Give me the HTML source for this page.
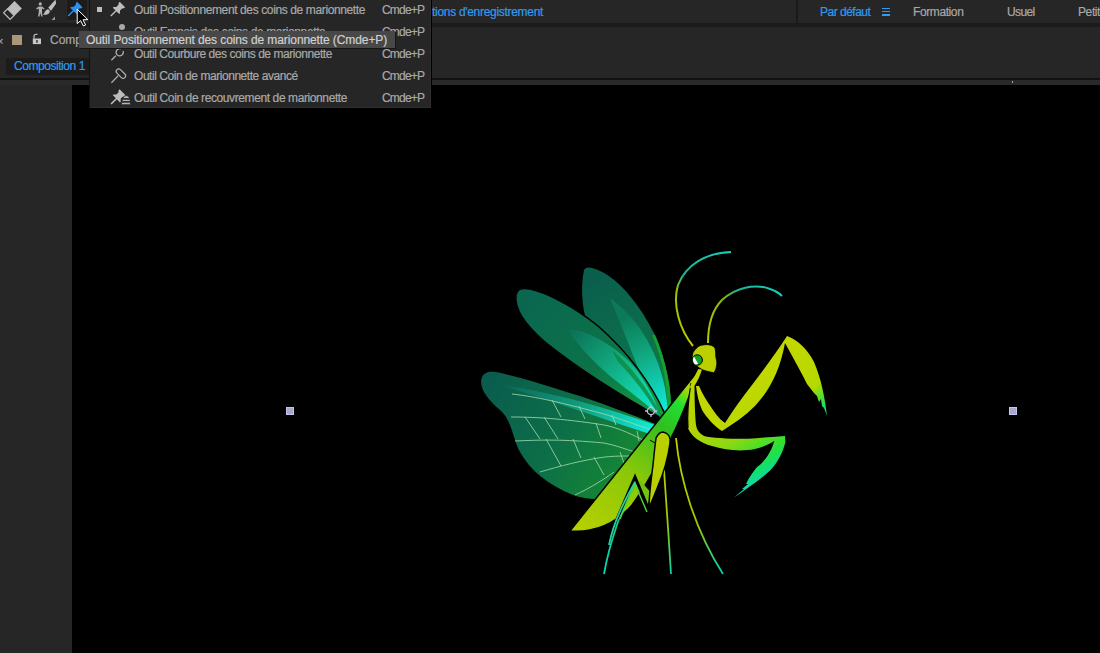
<!DOCTYPE html>
<html><head><meta charset="utf-8">
<style>
*{margin:0;padding:0;box-sizing:border-box}
html,body{width:1100px;height:653px;overflow:hidden;background:#000;font-family:"Liberation Sans",sans-serif}
.a{position:absolute}
#tb{left:0;top:0;width:1100px;height:23px;background:#262626}
#strip{left:0;top:23px;width:1100px;height:4px;background:#1b1b1b}
#panel{left:0;top:27px;width:1100px;height:52px;background:#262626}
#pl1{left:0;top:78px;width:1100px;height:2px;background:#121212}
#pl2{left:0;top:80px;width:1100px;height:5px;background:#2a2a2a}
#leftp{left:0;top:85px;width:72px;height:568px;background:#262626}
.t{position:absolute;font-size:12px;white-space:nowrap;line-height:14px;-webkit-text-stroke:0.2px currentColor}
.g{color:#a9a9a9}
.b{color:#2f9bf0}
#menu{left:89px;top:0;width:343px;height:108px;background:#262626;border-left:1px solid #121212;border-right:1px solid #000;box-shadow:inset -1px -1px 0 #2e2e2e}
#tip{left:79px;top:31px;width:316px;height:17px;background:#484848;box-shadow:1px 1px 0 #161616}
</style></head><body>
<div class="a" id="tb"></div>
<div class="a" id="strip"></div>
<div class="a" id="panel"></div>
<div class="a" id="pl1"></div>
<div class="a" id="pl2"></div>
<div class="a" id="leftp"></div>
<!-- vertical separator top bar -->
<div class="a" style="left:796px;top:0;width:2px;height:23px;background:#1a1a1a"></div>
<div class="a" style="left:1012px;top:81px;width:1px;height:2px;background:#9aa4b4"></div>

<!-- workspace tabs -->
<div class="t b" style="left:820px;top:5px;letter-spacing:-0.5px">Par défaut</div>
<div class="a" style="left:882px;top:8.2px;width:8px;height:1.2px;background:#2f9bf0"></div>
<div class="a" style="left:882px;top:11.3px;width:8px;height:1.2px;background:#2f9bf0"></div>
<div class="a" style="left:882px;top:14.4px;width:8px;height:1.2px;background:#2f9bf0"></div>
<div class="t g" style="left:913px;top:5px;letter-spacing:-0.4px">Formation</div>
<div class="t g" style="left:1007px;top:5px;letter-spacing:-0.6px">Usuel</div>
<div class="t g" style="left:1078px;top:5px;letter-spacing:-0.4px">Petit</div>
<div class="t b" style="left:432px;top:5px;letter-spacing:-0.3px">tions d'enregistrement</div>

<!-- panel row -->
<div class="t g" style="left:-3px;top:34px;font-size:11px">×</div>
<div class="a" style="left:12px;top:35px;width:10px;height:10px;background:#a89878"></div>
<div class="t g" style="left:50px;top:33px">Comp</div>
<div class="a" style="left:6px;top:58px;width:84px;height:17px;background:#1c1c1c;border-radius:2px"></div>
<div class="t b" style="left:14px;top:59px;letter-spacing:-0.45px">Composition 1</div>

<!-- toolbar icons -->
<div class="a" style="left:66px;top:0;width:22px;height:21px;background:#1b1b1b;border:1px solid #2a2a2a;border-top:none;border-radius:0 0 3px 3px"></div>

<!-- menu -->
<div class="a" id="menu"></div>
<div class="a" style="left:97px;top:7px;width:5px;height:5px;background:#bdbdbd"></div>
<div class="t g" style="left:134px;top:3px;letter-spacing:-0.38px">Outil Positionnement des coins de marionnette</div>
<div class="t g" style="left:134px;top:25px;letter-spacing:-0.38px">Outil Empois des coins de marionnette</div>
<div class="t g" style="left:134px;top:47px;letter-spacing:-0.45px">Outil Courbure des coins de marionnette</div>
<div class="t g" style="left:134px;top:69px;letter-spacing:-0.45px">Outil Coin de marionnette avancé</div>
<div class="t g" style="left:134px;top:91px;letter-spacing:-0.4px">Outil Coin de recouvrement de marionnette</div>
<div class="t g" style="left:382px;top:3px;letter-spacing:-0.8px">Cmde+P</div>
<div class="t g" style="left:382px;top:25px;letter-spacing:-0.8px">Cmde+P</div>
<div class="t g" style="left:382px;top:47px;letter-spacing:-0.8px">Cmde+P</div>
<div class="t g" style="left:382px;top:69px;letter-spacing:-0.8px">Cmde+P</div>
<div class="t g" style="left:382px;top:91px;letter-spacing:-0.8px">Cmde+P</div>

<!--ICONS--><svg class="a" style="left:0;top:0" width="440" height="110" viewBox="0 0 440 110">
<!-- eraser -->
<g transform="translate(14.5,1.1) rotate(45)">
<rect x="0" y="0" width="10.4" height="10.4" fill="#bdbdbd"/>
<rect x="0.6" y="10.4" width="9.2" height="5.6" fill="none" stroke="#bdbdbd" stroke-width="1.2"/>
</g>
<!-- puppet figure + brush -->
<circle cx="40.3" cy="3.9" r="1.6" fill="#b0b0b0"/>
<path d="M36.2,8.2 L39,6.6 H42 L44.6,8.6 L44,9.4 L42,8.4 V12 L42.5,16.5 H41.2 L40.3,12.8 L39.5,16.5 H38 L38.8,12 V8.6 L36.8,9.4 Z" fill="#b0b0b0"/>
<path d="M49,8.5 L54.8,2 L55,3.2 L50.2,10" stroke="#bdbdbd" stroke-width="2.2" fill="none"/>
<path d="M47.5,9.2 C50,9.5 50.5,12 48.8,13.6 C47.4,14.8 45,15 43,15 C44.5,13 45,10 47.5,9.2 Z" fill="#bdbdbd"/>
<path d="M55,16.5 V20 H51.5 Z" fill="#9a9a9a"/>
<!-- highlighted blue pin -->
<path d="M-3.8,0 H3.8 V1.6 L2.6,3 V6 L4.5,8 V9 H-4.5 V8 L-2.6,6 V3 L-3.8,1.6 Z M-0.7,9 H0.7 V16.4 H-0.7 Z" transform="translate(79.75,4.45) rotate(45)" fill="#2b8ff0"/>
<!-- menu icons -->
<path d="M-3.8,0 H3.8 V1.6 L2.6,3 V6 L4.5,8 V9 H-4.5 V8 L-2.6,6 V3 L-3.8,1.6 Z M-0.7,9 H0.7 V16.4 H-0.7 Z" transform="translate(122.4,4.5) rotate(45)" fill="#bdbdbd"/>
<circle cx="122" cy="27" r="3" fill="#a8a8a8"/>
<path d="M123.08,51.07 A3.6,3.6 0 1 1 120.93,48.92" fill="none" stroke="#b0b0b0" stroke-width="1.3"/>
<path d="M111.4,60.2 L115.8,55.8" stroke="#b0b0b0" stroke-width="1.3"/>
<g transform="translate(120.9,73.6) rotate(45)"><rect x="-5.6" y="-2.5" width="11.2" height="5" rx="2.5" fill="none" stroke="#b0b0b0" stroke-width="1.2"/></g>
<path d="M111.4,82.7 L118.3,75.6" stroke="#b0b0b0" stroke-width="1.3"/>
<path d="M-3.8,0 H3.8 V1.6 L2.6,3 V6 L4.5,8 V9 H-4.5 V8 L-2.6,6 V3 L-3.8,1.6 Z M-0.7,9 H0.7 V16.4 H-0.7 Z" transform="translate(122.7,92.4) rotate(45) scale(1.15,1)" fill="#bdbdbd"/>
<g fill="#b4b4b4" stroke="#262626" stroke-width="0.9">
<path d="M123,98.6 C123.3,96.6 124.5,95.6 126.2,95.6 C127.9,95.6 129.1,96.6 129.4,98.6 Z"/>
<rect x="122.2" y="99.3" width="8" height="2.2" rx="1"/>
<rect x="121.4" y="102.2" width="9" height="2.6" rx="0.6"/>
</g>
<!-- lock -->
<rect x="32.8" y="38.5" width="8.2" height="5.6" fill="#c8c8c8"/>
<path d="M34,38.5 V36.5 C34,34.6 35.5,34 37.5,34.3" stroke="#c8c8c8" stroke-width="1.2" fill="none"/>
<rect x="36.3" y="40" width="1.3" height="2.8" fill="#262626"/>
<!-- cursor -->
<path d="M77.2,9.2 L77.2,23.6 L80.6,20.6 L83.4,26 L85.6,25 L83,19.8 L87.8,19.6 Z" fill="#000" stroke="#fff" stroke-width="1"/>
</svg>
<!--/ICONS-->
<!-- tooltip -->
<div class="a" id="tip"></div>
<div class="t" style="left:86px;top:33px;color:#d0d0d0;letter-spacing:-0.1px">Outil Positionnement des coins de marionnette (Cmde+P)</div>

<!--MANTIS--><svg class="a" style="left:0;top:0" width="1100" height="653" viewBox="0 0 1100 653">
<defs>
<linearGradient id="gA" gradientUnits="userSpaceOnUse" x1="590" y1="275" x2="668" y2="415">
<stop offset="0" stop-color="#0a5e4c"/><stop offset="0.5" stop-color="#0c6e4c"/><stop offset="1" stop-color="#0e8a40"/></linearGradient>
<linearGradient id="gAs" gradientUnits="userSpaceOnUse" x1="620" y1="320" x2="665" y2="415">
<stop offset="0" stop-color="#0c7a58"/><stop offset="0.4" stop-color="#10a880"/><stop offset="1" stop-color="#10f0e0"/></linearGradient>
<linearGradient id="gB" gradientUnits="userSpaceOnUse" x1="520" y1="295" x2="662" y2="415">
<stop offset="0" stop-color="#0a6650"/><stop offset="0.55" stop-color="#0c7248"/><stop offset="1" stop-color="#10a040"/></linearGradient>
<linearGradient id="gBs" gradientUnits="userSpaceOnUse" x1="572" y1="332" x2="660" y2="418"><stop offset="0" stop-color="#0c7258"/><stop offset="0.3" stop-color="#109a72"/><stop offset="0.65" stop-color="#12c8a0"/><stop offset="1" stop-color="#10f0e0"/></linearGradient>
<linearGradient id="gC" gradientUnits="userSpaceOnUse" x1="485" y1="380" x2="640" y2="470">
<stop offset="0" stop-color="#0a5c4e"/><stop offset="0.5" stop-color="#0c6e48"/><stop offset="1" stop-color="#168a30"/></linearGradient>
<linearGradient id="gCs" gradientUnits="userSpaceOnUse" x1="510" y1="385" x2="657" y2="428">
<stop offset="0" stop-color="#0c6a58"/><stop offset="0.5" stop-color="#10a080"/><stop offset="1" stop-color="#10f0e0"/></linearGradient>
<linearGradient id="gBody" gradientUnits="userSpaceOnUse" x1="575" y1="530" x2="690" y2="390">
<stop offset="0" stop-color="#b8d000"/><stop offset="0.45" stop-color="#88c808"/><stop offset="0.75" stop-color="#30c020"/><stop offset="0.9" stop-color="#20e030"/><stop offset="1" stop-color="#b0d800"/></linearGradient>
<linearGradient id="gArm1" gradientUnits="userSpaceOnUse" x1="760" y1="340" x2="826" y2="420"><stop offset="0" stop-color="#c4d800"/><stop offset="0.68" stop-color="#b8d800"/><stop offset="0.8" stop-color="#50e030"/><stop offset="0.9" stop-color="#10e070"/><stop offset="1" stop-color="#10d0b0"/></linearGradient>
<linearGradient id="gArm2" gradientUnits="userSpaceOnUse" x1="700" y1="420" x2="740" y2="495"><stop offset="0" stop-color="#b8d400"/><stop offset="0.4" stop-color="#90d810"/><stop offset="0.68" stop-color="#30e030"/><stop offset="0.85" stop-color="#10e070"/><stop offset="1" stop-color="#10d8c0"/></linearGradient>
<linearGradient id="gAnt1" gradientUnits="userSpaceOnUse" x1="690" y1="345" x2="730" y2="252">
<stop offset="0" stop-color="#b8c800"/><stop offset="0.45" stop-color="#a0c000"/><stop offset="0.6" stop-color="#20b090"/><stop offset="1" stop-color="#10d0c0"/></linearGradient>
<linearGradient id="gAnt2" gradientUnits="userSpaceOnUse" x1="708" y1="343" x2="782" y2="296">
<stop offset="0" stop-color="#b8c800"/><stop offset="0.4" stop-color="#90b800"/><stop offset="0.6" stop-color="#20b090"/><stop offset="1" stop-color="#10d0c0"/></linearGradient>
<linearGradient id="gLeg" gradientUnits="userSpaceOnUse" x1="0" y1="440" x2="0" y2="575">
<stop offset="0" stop-color="#c0d000"/><stop offset="0.6" stop-color="#a0c800"/><stop offset="1" stop-color="#00d0b0"/></linearGradient>
<linearGradient id="gLegT" gradientUnits="userSpaceOnUse" x1="0" y1="480" x2="0" y2="575">
<stop offset="0" stop-color="#30c060"/><stop offset="1" stop-color="#00d8c0"/></linearGradient>
</defs>
<!-- Wing A -->
<path d="M584,270 C580,290 582,315 592,335 C610,370 640,398 666,416 L671,414 C672,390 666,360 655,335 C640,305 620,280 600,271 C592,267 586,266 584,270 Z" fill="url(#gA)"/>
<path d="M610,298 C638,318 658,352 665,388 L669,416 C660,405 647,390 639,370 C631,350 620,322 610,298 Z" fill="url(#gAs)"/>
<path d="M655,335 C666,360 672,390 671,414 L668,414 C668,390 664,362 652,335 Z" fill="#18a030"/>
<!-- Wing B -->
<path d="M516,295 C514,310 525,325 545,342 C580,370 625,398 665,420 L664,412 C652,385 628,352 598,326 C572,305 545,292 530,289 C520,287 517,290 516,295 Z" fill="url(#gB)" stroke="#000" stroke-width="1.5"/>
<path d="M568,330 C585,328 612,345 630,362 C646,380 655,400 661,417 C650,407 630,392 610,376 C592,361 578,345 568,330 Z" fill="url(#gBs)"/>
<path d="M612,350 C630,365 648,388 662,416 L660,418 C650,400 636,380 618,362 Z" fill="#0e8a40" opacity="0.8"/>
<!-- Wing C -->
<path d="M482,377 C478,388 488,400 500,410 C512,420 513,440 520,452 C530,470 548,485 573,495 C582,498 590,499 596,499 L658,425 C640,418 600,402 573,394 C545,385 520,377 496,372 C488,371 484,373 482,377 Z" fill="url(#gC)"/>
<path d="M500,385 C540,390 600,405 658,426 L650,434 C600,418 550,400 500,385 Z" fill="url(#gCs)"/>
<!-- Wing C veins -->
<g stroke="#a0dcb0" stroke-width="0.9" fill="none" opacity="0.9">
<path d="M512,394 C530,396 552,400 604,414 C630,422 645,428 655,431"/>
<path d="M511,417 C530,417 560,418 604,425 C620,428 635,436 645,441"/>
<path d="M515,441 C540,440 562,439 604,443 C615,445 625,449 635,452"/>
<path d="M540,472 C560,466 583,460 605,457 C615,456 622,456 629,456"/>
<path d="M575,495 C590,488 603,480 614,472"/>
<path d="M552,400 L561,417 M579,406 L585,419 M612,415 L616,425 M637,431 L639,441"/>
<path d="M525,417 L540,439 M544,417 L558,439 M596,423 L601,438"/>
<path d="M546,439 L561,466 M573,439 L581,458 M620,452 L625,466 M594,457 L604,475"/>
</g>
<!-- Body -->
<path d="M570,531 L699,369.5 L702,370 C699,377 696,383 692,388 C688,400 682,415 675,430 C665,450 650,480 632,505 C617,522 597,533 570,531 Z" fill="url(#gBody)" stroke="#000" stroke-width="1.5"/>
<path d="M650,440 C655,444 665,446 672,440" stroke="#000" stroke-width="1" fill="none"/>
<!-- thin legs -->
<path d="M634,480 C622,510 610,540 604,574" stroke="url(#gLegT)" stroke-width="1.8" fill="none"/>
<path d="M664,470 C666,500 669,540 671,574" stroke="url(#gLeg)" stroke-width="1.8" fill="none"/>
<path d="M676,438 C680,480 695,530 723,574" stroke="url(#gLeg)" stroke-width="1.8" fill="none"/>
<!-- zigzag leg -->
<path d="M618,518 C625,530 630,520 650,492" stroke="none" fill="none"/>
<path d="M617,519 L635,478 L648,508 L652,494 L640,480 Z" fill="#70c410"/>
<polyline points="617,519 635,477 648,508 654,491" stroke="#000" stroke-width="3" fill="none" stroke-linejoin="miter"/>
<polyline points="620,519 635,484 647,512" stroke="#50d838" stroke-width="1.4" fill="none"/>
<path d="M635,482 C625,500 614,520 609,545" stroke="#20d0a0" stroke-width="1.8" fill="none"/>
<!-- femur -->
<path d="M663,432 C668,433 671,437 670,443 C668,458 664,472 658,486 C655,494 652,501 649,508 C649,495 651,480 653,465 C654,455 655,445 656,438 C658,434 660,432 663,432 Z" fill="#b8d000" stroke="#000" stroke-width="1.5"/>
<!-- arm 1 -->
<path d="M696,386 C697,395 699,403 702,410 C707,418 714,426 722,431 C733,424 745,416 755,406 C770,390 780,370 785,343 C790,352 800,370 807,384 L814,393 L817,396 L819,402 L821,399 L822,406 L824,408 L827,416 C825,398 821,378 814,362 C808,350 798,340 787,336 C778,350 765,368 752,385 C742,398 733,410 725,423 C719,419 715,413 711,407 C706,400 702,393 699,386 Z" fill="url(#gArm1)"/>
<!-- arm 2 -->
<path d="M691,383 C689,395 687,412 688,428 C691,436 700,443 712,446 C725,450 740,452 755,449 C763,447 770,444 774.3,440.7 C772,450 765,462 757,467 C752,473 750,477 748.5,479 L746,484 L748,484 L742,489 L744,489 L734,497.6 C745,490 760,480 770.6,470 C778,462 783,452 785.3,442.5 L785,436 C770,437 760,438 748.5,438.8 C730,439 712,438 704,436 C699,433 697,430 696,425 C695,415 694.5,400 694.5,383 Z" fill="url(#gArm2)"/>
<path d="M691,383 C689,395 687,412 688,428" stroke="#000" stroke-width="1.2" fill="none"/>
<!-- neck -->
<path d="M698.3,369 L702,369.5 C700,376 697.5,381 695,385 L689,389 C692,382 695,375 698.3,369 Z" fill="#c0d400"/>
<!-- antennae -->
<path d="M693,346 C680,330 672,305 678,285 C686,265 705,253 731,252" stroke="url(#gAnt1)" stroke-width="2" fill="none"/>
<path d="M708,343 C708,325 712,310 722,300 C735,288 755,283 770,289 C776,291 780,294 782,296" stroke="url(#gAnt2)" stroke-width="2" fill="none"/>
<!-- head -->
<path d="M694,351 C697,347 700,345 703,345 C708,344 713,345 715,348 C716,352 715.5,356 716,358 C717,361 717,364 716.5,366 C716,369 715,372 713.5,372.7 C710,372 706,371 703,370 C699,368 693,364 692,359 C692,355 693,352 694,351 Z" fill="#bcd000" stroke="#000" stroke-width="0.8"/>
<circle cx="697.2" cy="360" r="5.2" fill="#10a030" stroke="#000" stroke-width="1"/>
<path d="M694,356.5 C692.5,358.5 692.8,362 694.5,364 C696,365 697.5,364.5 698,363.5 Z" fill="#fff"/>
<!-- anchor -->
<circle cx="651" cy="411" r="3.6" fill="none" stroke="#c8bcd8" stroke-width="1.3"/>
<path d="M645,411 L647,411 M655,411 L657,411 M651,405 L651,407 M651,415 L651,417" stroke="#c8bcd8" stroke-width="1.3"/>
</svg>
<!--/MANTIS-->
<!-- canvas markers -->
<div class="a" style="left:286px;top:407px;width:8px;height:8px;background:#a8a8cc;border:1px solid #c4c4ec"></div>
<div class="a" style="left:1009px;top:407px;width:8px;height:8px;background:#a8a8cc;border:1px solid #c4c4ec"></div>

</body></html>
